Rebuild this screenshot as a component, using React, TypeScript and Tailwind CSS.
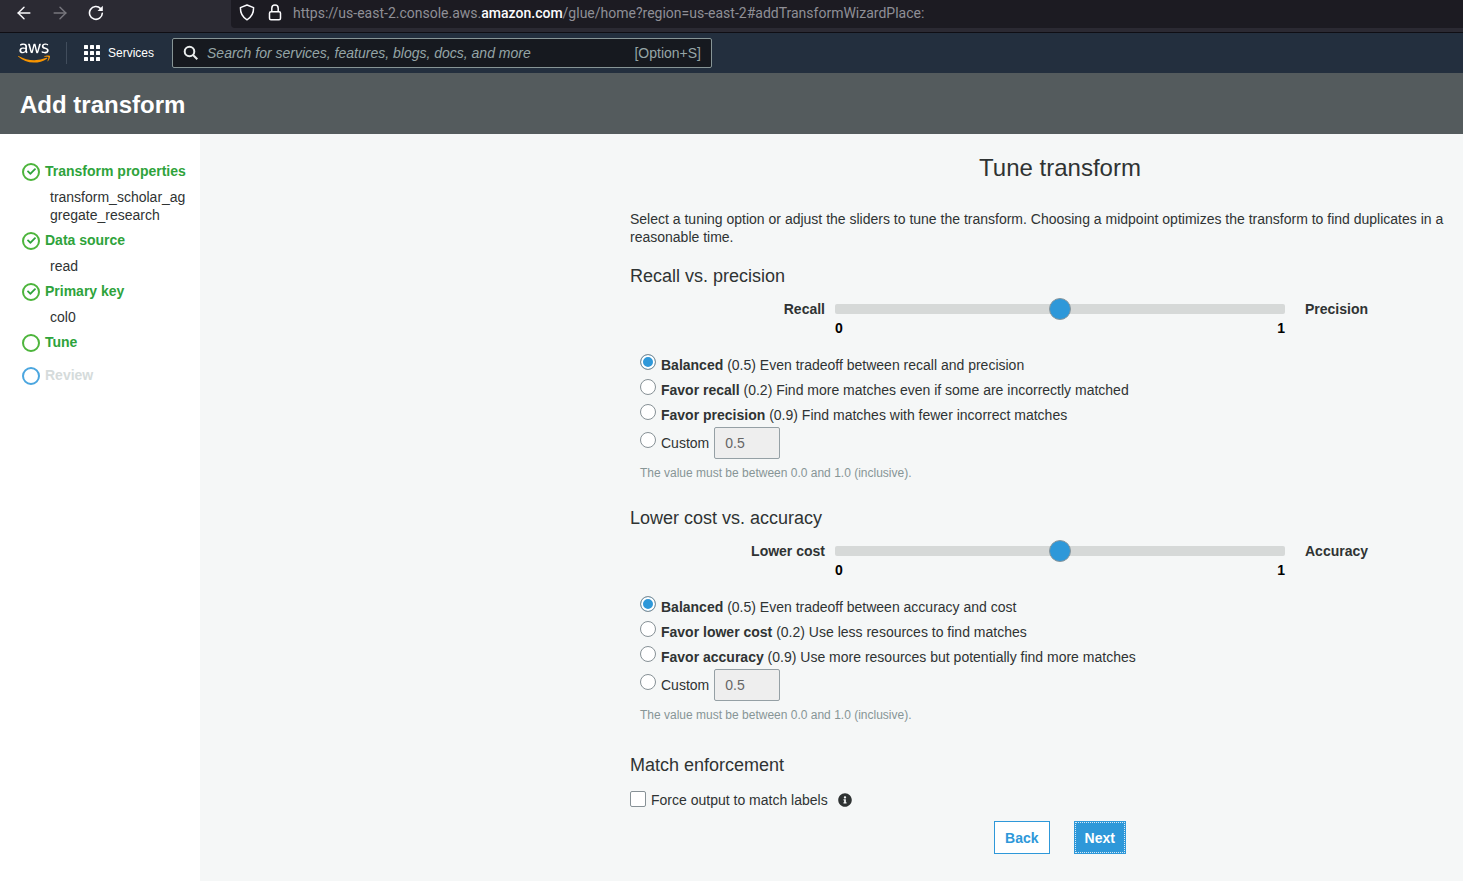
import { useState } from "react";
import { FaAws, FaInfoCircle, FaCheck } from "react-icons/fa";
import { ArrowLeft, ArrowRight } from "lucide-react";

type Option = { name: string; value: string; text: string };

type TuningProps = {
  id: string;
  title: string;
  left: string;
  right: string;
  options: Option[];
};

function BrowserBar() {
  return (
    <div className="flex h-[33px] border-b border-[#0f0e14] bg-[#2b2a33] text-[#fbfbfe]">
      <div className="flex w-[231px] shrink-0 items-start gap-4 pl-[14px] pt-[3px]">
        <button aria-label="Go back" className="flex size-5 items-center justify-center">
          <ArrowLeft size={20} strokeWidth={1.7} />
        </button>
        <button aria-label="Go forward" className="flex size-5 items-center justify-center text-[#78777e]">
          <ArrowRight size={20} strokeWidth={1.7} />
        </button>
        <button aria-label="Reload" className="flex size-5 items-center justify-center">
          <svg width="16" height="16" viewBox="0 0 16 16" fill="none" stroke="currentColor" strokeWidth="1.6">
            <path d="M14.3 8.2A6.4 6.4 0 1 1 12.6 3.6" strokeLinecap="round" />
            <path d="M14.8 .8v5.1H9.6z" fill="currentColor" stroke="none" />
          </svg>
        </button>
      </div>
      <div className="flex h-7 min-w-0 flex-1 items-start gap-[10px] rounded-bl bg-[#1c1b22] pl-2 pt-[4px]">
        <svg className="shrink-0" width="16" height="18" viewBox="0 0 16 18" fill="none" stroke="currentColor" strokeWidth="1.5" strokeLinejoin="round">
          <path d="M8 1 14.6 3.6c.1 5.2-1.3 9.2-6.6 12.2C2.7 12.8 1.3 8.8 1.4 3.6z" />
        </svg>
        <svg className="ml-0.5 shrink-0" width="16" height="18" viewBox="0 0 16 18" fill="none" stroke="currentColor" strokeWidth="1.5">
          <rect x="2.5" y="7.7" width="11" height="8" rx="1.5" />
          <path d="M4.8 7.5V4.2a3.2 3.2 0 0 1 6.4 0v3.3" />
        </svg>
        <p className="truncate font-[Roboto,sans-serif] text-sm leading-[18px] text-[#8f8f96]">
          https://us-east-2.console.aws.<span className="font-medium text-[#fbfbfe]">amazon.com</span>
          /glue/home?region=us-east-2#addTransformWizardPlace:
        </p>
      </div>
    </div>
  );
}

function NavBar() {
  return (
    <nav className="flex h-10 items-center bg-[#232f3e] pl-[18px] text-white">
      <a href="#home" aria-label="AWS home" className="flex">
        <svg width="0" height="0" aria-hidden="true">
          <defs>
            <linearGradient id="aws-colors" x1="0" y1="0" x2="0" y2="1">
              <stop offset="0.62" stopColor="#ffffff" />
              <stop offset="0.62" stopColor="#f79400" />
            </linearGradient>
          </defs>
        </svg>
        <FaAws className="h-[26px] w-8" style={{ fill: "url(#aws-colors)" }} />
      </a>
      <div className="ml-4 h-[22px] w-px bg-[#414d5c]" />
      <button className="ml-[17px] flex items-center gap-2 text-xs">
        <svg width="16" height="16" viewBox="0 0 16 16" fill="currentColor">
          {[0, 6, 12].map((y) =>
            [0, 6, 12].map((x) => <rect key={`${x}-${y}`} x={x} y={y} width="4" height="4" rx="0.5" />),
          )}
        </svg>
        Services
      </button>
      <label className="ml-[18px] flex h-[30px] w-[540px] items-center rounded-xs border border-[#879596] bg-[#16191f] px-[10px] text-sm text-[#95a5a6]">
        <svg className="shrink-0 text-[#eaeded]" width="16" height="16" viewBox="0 0 16 16" fill="none" stroke="currentColor" strokeWidth="2">
          <circle cx="6.5" cy="6.5" r="4.8" />
          <path d="m10 10 4.3 4.3" />
        </svg>
        <input
          type="search"
          aria-label="Search"
          placeholder="Search for services, features, blogs, docs, and more"
          className="ml-2 min-w-0 flex-1 bg-transparent italic outline-none placeholder:text-[#95a5a6]"
        />
        <span>[Option+S]</span>
      </label>
    </nav>
  );
}

const steps = [
  { name: "Transform properties", detail: "transform_scholar_aggregate_research", state: "done" },
  { name: "Data source", detail: "read", state: "done" },
  { name: "Primary key", detail: "col0", state: "done" },
  { name: "Tune", detail: "", state: "current" },
  { name: "Review", detail: "", state: "next" },
];

function Steps() {
  return (
    <aside className="w-[200px] shrink-0 bg-white pl-[22px] pt-[21px]">
      <ol>
        {steps.map((step) => (
          <li key={step.name}>
            <a
              href="#step"
              className={
                step.state === "next"
                  ? "flex h-[33px] items-center gap-[5px] font-bold text-[#d5dbdb]"
                  : "flex h-[33px] items-center gap-[5px] font-bold text-[#2ea33b]"
              }
            >
              <span
                className={
                  step.state === "next"
                    ? "flex size-[18px] items-center justify-center rounded-full border-2 border-[#4ba6df]"
                    : "flex size-[18px] items-center justify-center rounded-full border-2 border-[#4db53c]"
                }
              >
                {step.state === "done" && <FaCheck size={9} />}
              </span>
              <span className="pb-0.5">{step.name}</span>
            </a>
            {step.detail && <p className="ml-7 w-[138px] break-all">{step.detail}</p>}
          </li>
        ))}
      </ol>
    </aside>
  );
}

const radioStyle =
  "mb-1.5 size-4 shrink-0 appearance-none rounded-full border border-[#879196] bg-white checked:bg-[#2e98d9] checked:shadow-[inset_0_0_0_2px_#ffffff]";

function Tuning({ id, title, left, right, options }: TuningProps) {
  const [choice, setChoice] = useState("0.5");
  const [level, setLevel] = useState("0.5");

  return (
    <section>
      <h2 className="text-lg leading-6">{title}</h2>
      <div className="mt-[10px] grid grid-cols-[195px_450px_1fr] gap-x-[10px] font-bold">
        <label htmlFor={`${id}-slider`} className="text-right leading-[22px]">
          {left}
        </label>
        <input
          id={`${id}-slider`}
          type="range"
          min="0"
          max="1"
          step="0.1"
          value={level}
          onChange={(e) => setLevel(e.target.value)}
          className="h-[22px] w-full appearance-none bg-transparent [&::-webkit-slider-runnable-track]:h-[10px] [&::-webkit-slider-runnable-track]:rounded-xs [&::-webkit-slider-runnable-track]:bg-[#d6d9d8] [&::-webkit-slider-thumb]:-mt-1.5 [&::-webkit-slider-thumb]:size-[22px] [&::-webkit-slider-thumb]:appearance-none [&::-webkit-slider-thumb]:rounded-full [&::-webkit-slider-thumb]:border [&::-webkit-slider-thumb]:border-[#8b979c] [&::-webkit-slider-thumb]:bg-[#2e98d9]"
        />
        <span className="pl-[10px] leading-[22px]">{right}</span>
        <div className="col-start-2 flex justify-between leading-4 text-black">
          <span>0</span>
          <span>1</span>
        </div>
      </div>
      <div className="ml-[10px] mt-4">
        {options.map((option) => (
          <label key={option.name} className="flex h-[25px] items-center gap-[5px]">
            <input
              type="radio"
              name={id}
              className={radioStyle}
              checked={choice === option.value}
              onChange={() => {
                setChoice(option.value);
                setLevel(option.value);
              }}
            />
            <span>
              <b>{option.name}</b> ({option.value}) {option.text}
            </span>
          </label>
        ))}
        <div className="flex h-8 items-center">
          <label className="flex items-center gap-[5px]">
            <input
              type="radio"
              name={id}
              className={radioStyle}
              checked={choice === "custom"}
              onChange={() => setChoice("custom")}
            />
            Custom
          </label>
          <input
            type="text"
            aria-label={`${title} custom value`}
            value={level}
            disabled={choice !== "custom"}
            onChange={(e) => setLevel(e.target.value)}
            className="ml-[5px] h-8 w-[66px] rounded-xs border border-[#95a0a5] bg-white px-[10px] disabled:bg-[#eeeeee] disabled:text-[#666666]"
          />
        </div>
        <p className="mt-1.5 text-xs text-[#879596]">The value must be between 0.0 and 1.0 (inclusive).</p>
      </div>
    </section>
  );
}

export default function App() {
  return (
    <div className="flex min-h-screen flex-col overflow-hidden bg-[#f5f7f7] font-['Liberation_Sans',Arial,sans-serif] text-sm leading-[18px] text-[#2f3333]">
      <BrowserBar />
      <NavBar />
      <header className="bg-[#545b5d] px-5 pb-[15px] pt-[17px]">
        <h1 className="text-2xl leading-[29px] font-bold text-white">Add transform</h1>
      </header>
      <div className="flex flex-1">
        <Steps />
        <main className="min-w-0 flex-1 pl-[430px]">
          <form className="w-[860px] pb-6 pt-5" onSubmit={(e) => e.preventDefault()}>
            <h2 className="text-center text-2xl leading-7">Tune transform</h2>
            <p className="mt-7 pr-[27px]">
              Select a tuning option or adjust the sliders to tune the transform. Choosing a midpoint optimizes the
              transform to find duplicates in a reasonable time.
            </p>
            <div className="mt-[18px] flex flex-col gap-[25px]">
              <Tuning
                id="recall"
                title="Recall vs. precision"
                left="Recall"
                right="Precision"
                options={[
                  { name: "Balanced", value: "0.5", text: "Even tradeoff between recall and precision" },
                  { name: "Favor recall", value: "0.2", text: "Find more matches even if some are incorrectly matched" },
                  { name: "Favor precision", value: "0.9", text: "Find matches with fewer incorrect matches" },
                ]}
              />
              <Tuning
                id="cost"
                title="Lower cost vs. accuracy"
                left="Lower cost"
                right="Accuracy"
                options={[
                  { name: "Balanced", value: "0.5", text: "Even tradeoff between accuracy and cost" },
                  { name: "Favor lower cost", value: "0.2", text: "Use less resources to find matches" },
                  { name: "Favor accuracy", value: "0.9", text: "Use more resources but potentially find more matches" },
                ]}
              />
            </div>
            <h2 className="mt-[30px] text-lg leading-6">Match enforcement</h2>
            <div className="mt-[14px] flex items-center">
              <label className="flex items-center gap-[5px]">
                <input
                  type="checkbox"
                  className="mb-0.5 size-4 appearance-none rounded-xs border border-[#879196] bg-white checked:bg-[#2e98d9]"
                />
                Force output to match labels
              </label>
              <FaInfoCircle size={14} className="ml-[10px]" />
            </div>
            <div className="mt-3 flex justify-center gap-6 font-bold">
              <button type="button" className="h-[33px] border border-[#2e98d9] bg-white px-[10px] text-[#2e98d9]">
                Back
              </button>
              <button type="submit" className="flex h-[33px] bg-[#2e98d9] p-px text-white">
                <span className="flex h-full items-center border border-dotted border-[#d5eaf7] px-[9px]">Next</span>
              </button>
            </div>
          </form>
        </main>
      </div>
    </div>
  );
}
